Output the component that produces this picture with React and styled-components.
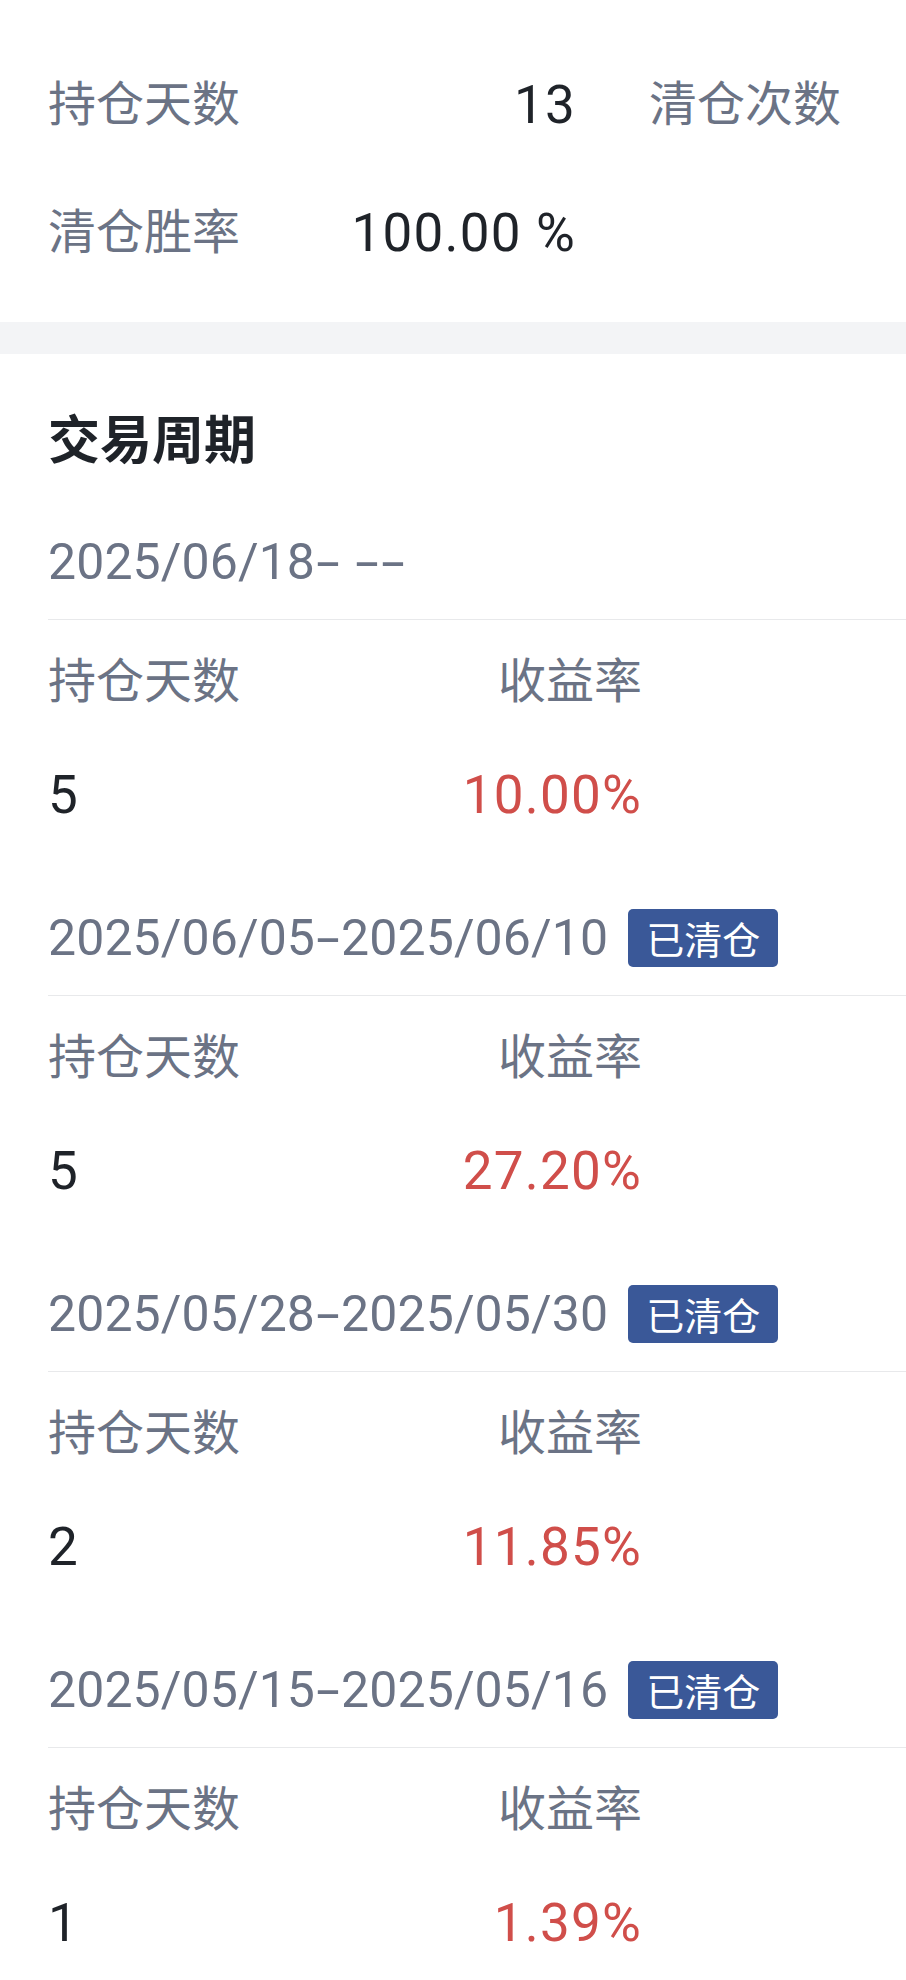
import React from 'react'
import styled, { createGlobalStyle } from 'styled-components'

const GlobalStyle = createGlobalStyle`
    body {
        margin: 0;
        background: #fff;
        font-family: Roboto, "Noto Sans CJK SC", sans-serif;
        overflow-x: hidden;
    }
`

const stats = [
    { label: '持仓天数', value: '13' },
    { label: '清仓次数' },
    { label: '清仓胜率', value: '100.00 %' },
]

const periods = [
    { start: '2025/06/18', end: null, days: 5, rate: '10.00%' },
    { start: '2025/06/05', end: '2025/06/10', days: 5, rate: '27.20%' },
    { start: '2025/05/28', end: '2025/05/30', days: 2, rate: '11.85%' },
    { start: '2025/05/15', end: '2025/05/16', days: 1, rate: '1.39%' },
]

const App = () => {
    return <Page>
        <GlobalStyle />
        <StatsGrid>
            {stats.map(s => <React.Fragment key={s.label}>
                <StatLabel>{s.label}</StatLabel>
                {s.value && <StatValue>{s.value}</StatValue>}
            </React.Fragment>)}
        </StatsGrid>
        <Band />
        <Section>
            <Title>交易周期</Title>
            {periods.map(p => <Period key={p.start}>
                <PeriodHeader>
                    <DateText>
                        {p.start}<Dash>-</Dash>
                        {p.end ? p.end : <> <Dash>-</Dash><Dash>-</Dash></>}
                    </DateText>
                    {p.end && <Badge>已清仓</Badge>}
                </PeriodHeader>
                <PeriodGrid>
                    <Label>持仓天数</Label>
                    <Label $right>收益率</Label>
                    <Value>{p.days}</Value>
                    <Value $right $red>{p.rate}</Value>
                </PeriodGrid>
            </Period>)}
        </Section>
    </Page>
}

const Page = styled.div`
    width: 100%;
    overflow: hidden;
`

const StatsGrid = styled.div`
    display: grid;
    grid-template-columns: 200px 255px 200px;
    column-gap: 73px;
    row-gap: 64px;
    padding: 73px 0 57px 48px;
`

const StatLabel = styled.div`
    font-size: 48px;
    line-height: 64px;
    color: #6b7385;
    white-space: nowrap;
`

const StatValue = styled.div`
    font-size: 53px;
    line-height: 64px;
    letter-spacing: 1.2px;
    color: #1f2329;
    text-align: right;
    white-space: nowrap;
`

const Band = styled.div`
    height: 32px;
    background: #f3f4f6;
`

const Section = styled.section`
    padding: 56px 0 40px 48px;
`

const Title = styled.h2`
    margin: 0 0 27px;
    font-size: 52px;
    font-weight: 700;
    line-height: 64px;
    color: #1f2329;
`

const Period = styled.div``

const PeriodHeader = styled.div`
    display: flex;
    align-items: center;
    height: 115px;
    padding-top: 3px;
    border-bottom: 1px solid #e8e9eb;
`

const DateText = styled.span`
    font-size: 50px;
    letter-spacing: 0.1px;
    color: #6b7385;
    white-space: nowrap;
`

const Dash = styled.span`
    display: inline-block;
    width: 26px;
    text-align: center;
    transform: scaleX(1.7);
`

const Badge = styled.span`
    display: inline-flex;
    align-items: center;
    height: 58px;
    margin-left: 20px;
    padding: 0 18px;
    border-radius: 5px;
    background: #3a5898;
    color: #fff;
    font-size: 38px;
`

const PeriodGrid = styled.div`
    display: grid;
    grid-template-columns: 297px 297px;
    row-gap: 49px;
    padding: 30px 0 50px;
`

const Label = styled.div`
    font-size: 48px;
    line-height: 64px;
    color: #6b7385;
    text-align: ${p => p.$right ? 'right' : 'left'};
`

const Value = styled.div`
    font-size: 53px;
    line-height: 64px;
    letter-spacing: ${p => p.$red ? '1.2px' : '0'};
    color: ${p => p.$red ? '#d04e4a' : '#1f2329'};
    text-align: ${p => p.$right ? 'right' : 'left'};
`

export default App
